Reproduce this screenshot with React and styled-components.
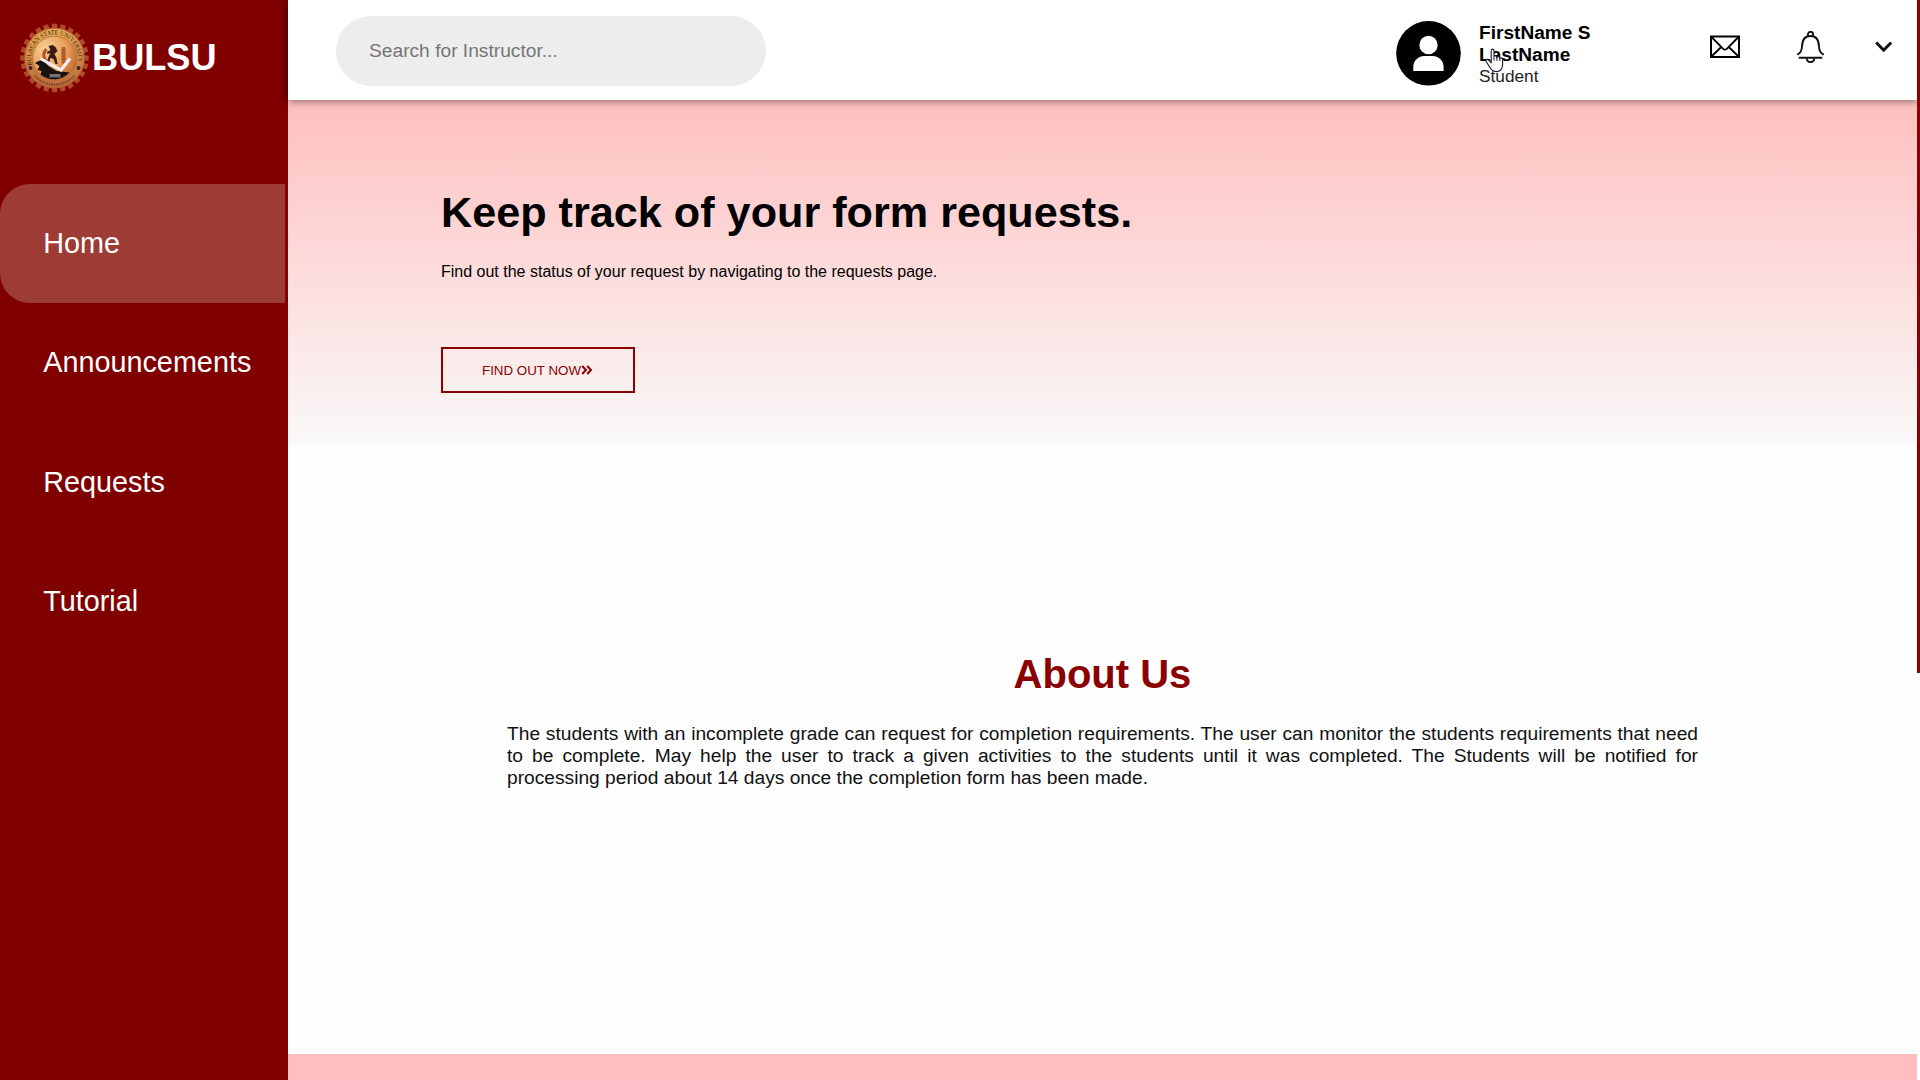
import React from "react";
import styled, { createGlobalStyle } from "styled-components";

const Global = createGlobalStyle`
  * { box-sizing: border-box; }
  html, body { margin: 0; padding: 0; overflow: hidden; }
  body { font-family: "Liberation Sans", Arial, sans-serif; background: #fff; color: #000; }
`;

const Page = styled.div`
  display: flex;
  width: 1920px;
  height: 1080px;
  overflow: hidden;
  background: #fefefe;
`;

const Sidebar = styled.aside`
  width: 288px;
  flex: none;
  background: #800000;
  color: #fff;
  border-right: 3px solid #850000;
`;

const Brand = styled.div`
  display: flex;
  align-items: center;
  height: 184px;
  padding: 0 0 69px 19px;
`;

const BrandName = styled.span`
  margin-left: 2px;
  font-size: 36.2px;
  font-weight: 700;
  line-height: 41px;
`;

const Nav = styled.nav`
  display: flex;
  flex-direction: column;
`;

const NavItem = styled.a`
  height: 119.3px;
  padding: 43px 43.2px 0;
  font-size: 28.8px;
  line-height: 33px;
  white-space: nowrap;
  border-radius: 30px 0 0 30px;
  background: ${(p) => (p.$active ? "#9d3c34" : "transparent")};
`;

const Main = styled.main`
  display: flex;
  flex-direction: column;
  flex: 1;
`;

const TopBar = styled.header`
  display: flex;
  align-items: flex-start;
  height: 100px;
  flex: none;
  background: #fff;
  box-shadow: 0 0 9px rgba(0, 0, 0, 0.6);
  position: relative;
  z-index: 1;
`;

const Search = styled.input`
  width: 430px;
  height: 70px;
  margin: 16px 0 0 48px;
  padding: 0 33px;
  border: 0;
  outline: 0;
  border-radius: 35px;
  background: #ededed;
  font: 19.2px "Liberation Sans", Arial, sans-serif;
  &::placeholder { color: #757575; }
`;

const Profile = styled.div`
  display: flex;
  align-items: flex-start;
  position: relative;
  margin: 21px 0 0 630px;
  width: 314px;
`;

const ProfileText = styled.div`
  width: 130px;
  margin-left: 18px;
  padding-top: 1px;
`;

const UserName = styled.div`
  font-size: 19.1px;
  line-height: 22px;
  font-weight: 700;
`;

const Role = styled.div`
  font-size: 17.28px;
  line-height: 20px;
  color: #222;
`;

const Cursor = styled.svg`
  position: absolute;
  left: 89px;
  top: 27px;
`;

const Icon = styled.svg`
  flex: none;
  margin-top: ${(p) => p.$top}px;
  margin-right: ${(p) => p.$gap}px;
`;

const Hero = styled.section`
  height: 345.6px;
  flex: none;
  padding: 87px 153px 0;
  background: linear-gradient(#ffbfbf, #f9f9f9);
`;

const HeroTitle = styled.h1`
  margin: 0;
  font-size: 43.2px;
  line-height: 50px;
`;

const HeroText = styled.p`
  margin: 26px 0 0;
  font-size: 16px;
  line-height: 18px;
`;

const HeroButton = styled.button`
  display: flex;
  align-items: center;
  width: 194px;
  height: 46px;
  margin-top: 66px;
  padding: 0 0 0 39px;
  border: 2px solid #8b0000;
  background: transparent;
  color: #8b0000;
  font: 13.333px "Liberation Sans", Arial, sans-serif;
`;

const About = styled.section`
  flex: 1;
  padding: 205.4px 219px 0;
`;

const AboutTitle = styled.h2`
  margin: 0;
  text-align: center;
  font-size: 40px;
  line-height: 46px;
  color: #8b0000;
`;

const AboutText = styled.p`
  margin: 26px 0 0;
  font-size: 19.2px;
  line-height: 22px;
  text-align: justify;
  color: #111;
`;

const Footer = styled.footer`
  height: 26px;
  flex: none;
  background: #ffbfbf;
`;

const ScrollTrack = styled.div`
  width: 3px;
  flex: none;
  background: #fff;
  position: relative;
  z-index: 2;
`;

const ScrollThumb = styled.div`
  height: 672.5px;
  background: #8b0000;
`;

const teeth = Array.from({ length: 24 }, (_, i) => i * 15);

function Seal() {
  return (
    <svg width="71" height="72" viewBox="-35.5 -36 71 72">
      <defs>
        <linearGradient id="rim" x1="0" y1="0" x2="0" y2="1">
          <stop offset="0" stopColor="#e8ad55" />
          <stop offset="0.5" stopColor="#d08a45" />
          <stop offset="1" stopColor="#b9693a" />
        </linearGradient>
        <radialGradient id="disc" cx="0.3" cy="0.3" r="0.8">
          <stop offset="0" stopColor="#f8cf94" />
          <stop offset="0.6" stopColor="#e89c58" />
          <stop offset="1" stopColor="#c46a32" />
        </radialGradient>
        <path id="arcTop" d="M-22.4 7A23.5 23.5 0 1 1 22.4 7" />
        <path id="arcLow" d="M-22.5 16A27.6 27.6 0 0 0 22.5 16" />
      </defs>
      {teeth.map((a) => (
        <rect key={a} x="-2.6" y="-34.2" width="5.2" height="7" fill="#b04a2c" transform={`rotate(${a})`} />
      ))}
      <circle r="30.5" fill="#b45c30" />
      <circle r="29.3" fill="url(#rim)" />
      <circle r="21.8" fill="url(#disc)" stroke="#a8652f" strokeWidth="0.7" />
      <text fontSize="6.4" fontFamily="Liberation Serif, serif" fill="#3c2216">
        <textPath href="#arcTop" textLength="85" lengthAdjust="spacingAndGlyphs">BULACAN STATE UNIVERSITY</textPath>
      </text>
      <path d="M-20 17.5A26.6 26.6 0 0 0 20 17.5" fill="none" stroke="#7d4526" strokeWidth="2.2" strokeDasharray="1.4 1" />
      <circle cx="-24" cy="10" r="2" fill="#3c2630" />
      <circle cx="24" cy="10" r="2" fill="#3c2630" />
      <path d="M-19.5 5L-16 3L-12 2L-9 5L-6 8L2 13L15 14.5A21.5 21.5 0 0 1-14 16.5L-13 13L-17 12L-15 8Z" fill="#15120f" />
      <path d="M-8-9A8 8 0 0 0-8 3" fill="none" stroke="#b5502c" strokeWidth="3" />
      <path d="M-6-12L-2-13L1-11L3-7L0-4L2 0L3 6H1L-1 1L-4 0L-6 6L-8 5L-6-1L-4-5L-7-4L-7.5-6L-4-8Z" fill="#3a1a14" />
      <path d="M7-11H11V7L7 5Z" fill="#b5662f" />
      <path d="M7-8H11M7-5H11M7-2H11M7 1H11" stroke="#8a4a22" strokeWidth="0.8" />
      <rect x="-5" y="16" width="11" height="3.4" fill="#77716c" />
      <path d="M-14 0.5L6.5 12L15.5 0.5" fill="none" stroke="#f0f0f5" strokeWidth="3" />
    </svg>
  );
}

export default function App() {
  return (
    <>
      <Global />
      <Page>
        <Sidebar>
          <Brand>
            <Seal />
            <BrandName>BULSU</BrandName>
          </Brand>
          <Nav>
            <NavItem $active>Home</NavItem>
            <NavItem>Announcements</NavItem>
            <NavItem>Requests</NavItem>
            <NavItem>Tutorial</NavItem>
          </Nav>
        </Sidebar>
        <Main>
          <TopBar>
            <Search placeholder="Search for Instructor..." />
            <Profile>
              <svg width="65" height="65" viewBox="0 0 65 65">
                <circle cx="32.5" cy="32.3" r="32.3" fill="#000" />
                <circle cx="32.5" cy="24" r="9.2" fill="#fff" />
                <path d="M17.3 50V46C17.3 39 23 35 28 35H37C42 35 47.6 39 47.6 46V50Z" fill="#fff" />
              </svg>
              <ProfileText>
                <UserName>FirstName S LastName</UserName>
                <Role>Student</Role>
              </ProfileText>
              <Cursor width="20" height="25" viewBox="0 0 20 25">
                <path
                  d="M6.2 14.5V2.8C6.2.6 9 .6 9 2.8V8.6C9.4 7.4 11.8 7.6 11.9 9.2C12.5 8.2 14.6 8.5 14.8 10.1C15.6 9.3 17.6 9.8 17.6 11.6V15.8C17.6 20.4 15.4 23.6 11.6 23.6C7.4 23.6 6 21.4 4.6 19L1.2 13.6C.2 11.6 2.4 10.8 3.6 12Z"
                  fill="#fff" stroke="#15152c" strokeWidth="1.1"
                />
                <path d="M9 8.5V12.5M11.9 9.2V12.8M14.8 10.1V13" stroke="#15152c" strokeWidth="1" fill="none" />
              </Cursor>
            </Profile>
            <Icon $top={35} $gap={57} width="30" height="23" viewBox="0 0 30 23" fill="none" stroke="#000" strokeWidth="2">
              <path d="M1 1.5H29V22H1Z" />
              <path d="M1.5 2L13.2 13.8Q15 15.4 16.8 13.8L28.5 2M1.5 21.5L11.2 12M28.5 21.5L18.8 12" strokeWidth="1.8" />
            </Icon>
            <Icon $top={31} $gap={51} width="27" height="32" viewBox="0 0 27 32" fill="none" stroke="#111" strokeWidth="1.9">
              <path d="M.8 23.3C3.6 22 4.8 19.5 5 15.5C5.2 8.5 8 5 13.5 5S21.8 8.5 22 15.5C22.2 19.5 23.4 22 26.2 23.3" strokeLinecap="round" />
              <path d="M2.5 26.8H24.5" strokeLinecap="round" />
              <path d="M10.9 5V3.5A2.6 2.6 0 0 1 16.1 3.5V5M9.8 27.5C10 32.2 17 32.2 17.2 27.5" />
            </Icon>
            <Icon $top={41} $gap={0} width="18" height="12" viewBox="0 0 18 12" fill="none" stroke="#111" strokeWidth="3">
              <path d="M1.2 1.5L8.7 9.2L16.2 1.5" />
            </Icon>
          </TopBar>
          <Hero>
            <HeroTitle>Keep track of your form requests.</HeroTitle>
            <HeroText>Find out the status of your request by navigating to the requests page.</HeroText>
            <HeroButton>
              FIND OUT NOW
              <svg width="12" height="10" viewBox="0 0 12 10" fill="none" stroke="#8b0000" strokeWidth="2">
                <path d="M1.2 1L5 5L1.2 9M6.2 1L10 5L6.2 9" />
              </svg>
            </HeroButton>
          </Hero>
          <About>
            <AboutTitle>About Us</AboutTitle>
            <AboutText>
              The students with an incomplete grade can request for completion requirements. The user can
              monitor the students requirements that need to be complete. May help the user to track a given
              activities to the students until it was completed. The Students will be notified for processing
              period about 14 days once the completion form has been made.
            </AboutText>
          </About>
          <Footer />
        </Main>
        <ScrollTrack>
          <ScrollThumb />
        </ScrollTrack>
      </Page>
    </>
  );
}
